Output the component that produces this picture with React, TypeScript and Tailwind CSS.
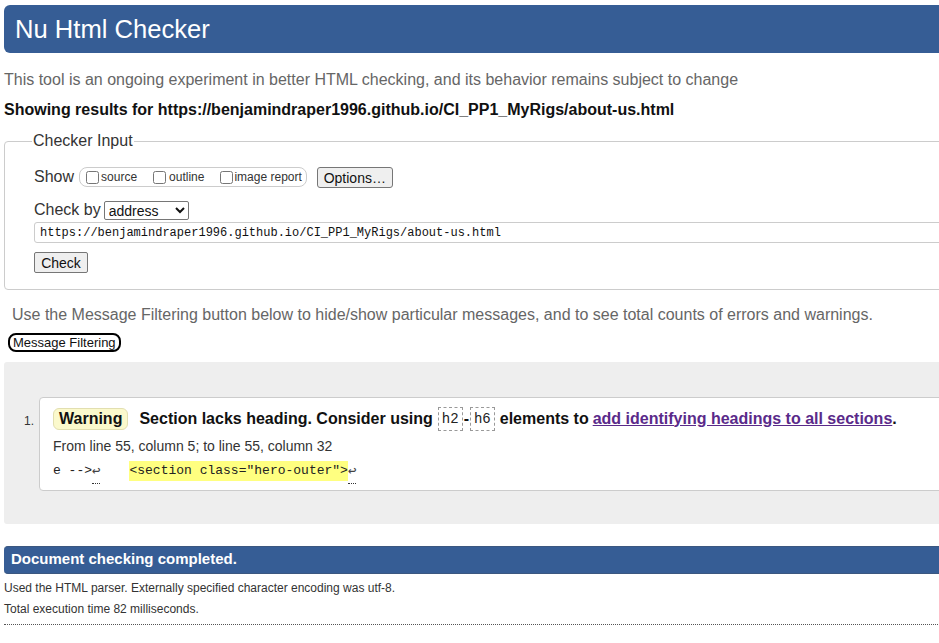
import React from 'react';

const mono = "font-['Liberation_Mono','DejaVu_Sans_Mono',monospace]";

const ReturnMark: React.FC = () => (
  <span className="relative inline-block text-[14px] text-[#444]">
    ↩
    <span className="absolute left-0 right-0 bottom-[-3px] border-b border-dotted border-[#333]" />
  </span>
);

const CodeBox: React.FC<{ children: React.ReactNode }> = ({ children }) => (
  <code className={`${mono} inline-block border border-dashed border-[#999] px-[3px] text-[14px] font-normal leading-[22px] text-[#222]`}>
    {children}
  </code>
);

export default function App() {
  return (
    <div className="w-[939px] h-[643px] overflow-hidden bg-white text-[#222] font-['Liberation_Sans',Arial,sans-serif]">
      <div className="w-[1000px] pl-[4px] pt-[5px]">
        {/* Header */}
        <h1 className="h-[48px] rounded-l-[6px] bg-[#365d95] pl-[11px] flex items-center text-[25.6px] text-white font-normal">
          Nu Html Checker
        </h1>

        <p className="mt-[17px] text-[16px] leading-[20px] text-[#666]">
          This tool is an ongoing experiment in better HTML checking, and its behavior remains subject to change
        </p>
        <p className="mt-[10px] text-[16px] leading-[20px] font-bold text-[#111]">
          Showing results for https://benjamindraper1996.github.io/CI_PP1_MyRigs/about-us.html
        </p>

        {/* Checker input */}
        <fieldset className="mt-[11px] border border-[#ccc] rounded-[4px] px-[29px] pt-[15px] pb-[16px]">
          <legend className="-ml-[2px] px-[1px] text-[16px] leading-[20px] text-[#333]">Checker Input</legend>

          <div className="flex items-center h-[22px]">
            <span className="text-[16px] text-[#333]">Show</span>
            <div className="ml-[5px] flex items-center h-[20px] border border-[#ccc] rounded-[8px] pl-[6px] pr-[4px]">
              <label className="flex items-center text-[12px] text-[#333]">
                <input type="checkbox" className="w-[13px] h-[13px] mr-[2px]" />
                source
              </label>
              <label className="ml-[16px] flex items-center text-[12px] text-[#333]">
                <input type="checkbox" className="w-[13px] h-[13px] mr-[3px]" />
                outline
              </label>
              <label className="ml-[16px] flex items-center text-[12px] text-[#333]">
                <input type="checkbox" className="w-[13px] h-[13px] mr-[1px]" />
                image report
              </label>
            </div>
            <button className="ml-[10px] h-[21px] w-[76px] bg-[#efefef] border border-[#767676] rounded-[3px] text-[14px] text-[#111]">
              Options…
            </button>
          </div>

          <div className="mt-[12px] flex items-center h-[20px]">
            <span className="text-[16px] text-[#333]">Check by</span>
            <select className="ml-[3px] h-[19px] w-[85px] bg-white border border-[#767676] rounded-[2px] text-[14px] text-[#111]">
              <option>address</option>
            </select>
          </div>

          <input
            type="text"
            readOnly
            value="https://benjamindraper1996.github.io/CI_PP1_MyRigs/about-us.html"
            className={`${mono} mt-[2px] block w-[1000px] h-[21px] border border-[#ccc] rounded-[3px] px-[5px] text-[12px] text-[#111]`}
          />

          <button className="mt-[9px] block h-[21px] w-[54px] bg-[#efefef] border border-[#767676] rounded-[2px] text-[14px] text-[#111]">
            Check
          </button>
        </fieldset>

        <p className="mt-[15px] pl-[8px] text-[16px] leading-[20px] text-[#666]">
          Use the Message Filtering button below to hide/show particular messages, and to see total counts of errors and warnings.
        </p>
        <button className="mt-[8px] ml-[4px] h-[19px] px-[3px] border-2 border-black rounded-[8px] bg-white text-[13px] leading-[14px] text-[#111]">
          Message Filtering
        </button>

        {/* Results */}
        <div className="mt-[8px] h-[162px] bg-[#eeeeee] rounded-l-[3px] pt-[35px]">
          <ol className="pl-[35px]">
            <li className="relative">
              <span className="absolute -left-[15px] top-[15px] text-[12px] text-[#333]">1.</span>
              <div className="h-[94px] bg-white border border-[#ccc] rounded-[4px] pl-[13px] pt-[9px]">
                <p className="flex items-center text-[16px] leading-[22px] font-bold text-[#111]">
                  <span className="h-[22px] px-[5px] bg-[#fbf9cc] border border-[#e2dfb0] rounded-[6px] leading-[20px]">
                    Warning
                  </span>
                  <span className="ml-[11px]">Section lacks heading. Consider using</span>
                  <span className="ml-[5px]"><CodeBox>h2</CodeBox></span>
                  <span className="mx-[1px]">-</span>
                  <CodeBox>h6</CodeBox>
                  <span className="ml-[5px]">elements to</span>
                  <a href="#" className="ml-[4px] text-[#5a2a8a] underline">add identifying headings to all sections</a>
                  <span>.</span>
                </p>
                <p className="mt-[6px] text-[14px] leading-[18px] text-[#333]">
                  From line 55, column 5; to line 55, column 32
                </p>
                <p className={`${mono} mt-[6px] text-[13px] leading-[20px] text-[#222] flex items-center`}>
                  <span>e --&gt;</span>
                  <ReturnMark />
                  <span className="ml-[29px] bg-[#ffff80]">&lt;section class="hero-outer"&gt;</span>
                  <ReturnMark />
                </p>
              </div>
            </li>
          </ol>
        </div>

        <h2 className="mt-[22px] h-[28px] bg-[#365d95] border-y border-[#3b5780] rounded-l-[4px] pl-[7px] flex items-center text-[15px] font-bold text-white">
          Document checking completed.
        </h2>
        <p className="mt-[6px] text-[12px] leading-[16px] text-[#333]">
          Used the HTML parser. Externally specified character encoding was utf-8.
        </p>
        <p className="mt-[5px] text-[12px] leading-[16px] text-[#333]">
          Total execution time 82 milliseconds.
        </p>
        <div className="mt-[7px] border-b border-dotted border-[#555]" />
      </div>
    </div>
  );
}
